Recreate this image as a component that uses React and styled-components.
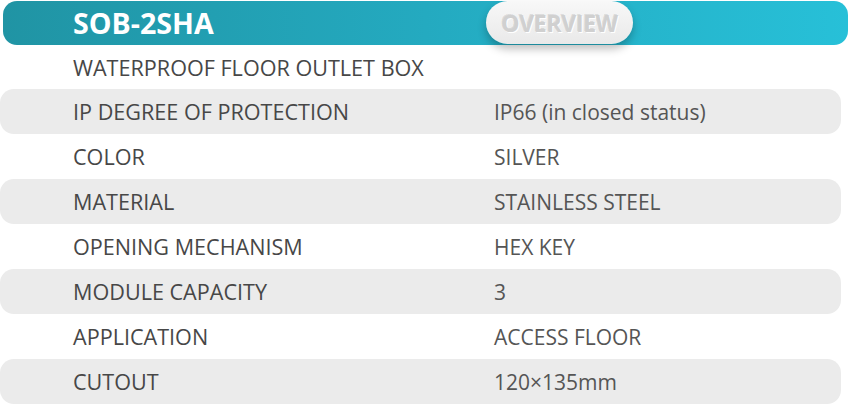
import styled, { createGlobalStyle } from "styled-components";

const Global = createGlobalStyle`
  html, body {
    margin: 0;
    padding: 0;
    background: #fff;
  }
  body {
    font-family: "Open Sans", "Noto Sans", sans-serif;
  }
`;

const Wrap = styled.div`
  width: 850px;
  height: 404px;
  overflow: hidden;
  padding-top: 1px;
  box-sizing: border-box;
`;

const Header = styled.header`
  margin: 0 2px 0 3px;
  height: 44px;
  border-radius: 14px;
  background: linear-gradient(90deg, #2094a4 0%, #24aac0 50%, #27c0d8 100%);
  display: flex;
  align-items: center;
  position: relative;
`;

const Title = styled.h1`
  margin: 0 0 0 70px;
  font-size: 28.6px;
  font-weight: 700;
  color: #fff;
  line-height: 1;
`;

const Pill = styled.div`
  position: absolute;
  left: 483px;
  top: 0;
  width: 147px;
  height: 43px;
  border-radius: 22px;
  background: linear-gradient(180deg, #f8f8f8 0%, #e9e9e9 100%);
  box-shadow: 0 5px 8px rgba(0, 0, 0, 0.25);
  display: flex;
  align-items: center;
  justify-content: center;
`;

const PillText = styled.span`
  font-size: 23px;
  font-weight: 700;
  color: #d0d0d0;
  letter-spacing: -0.3px;
  text-shadow: 1px 1px 0 #ffffff, -1px -1px 0 rgba(0, 0, 0, 0.1);
`;

const Subtitle = styled.div`
  height: 44px;
  display: flex;
  align-items: center;
  padding-left: 73px;
  font-size: 21.6px;
  font-weight: 500;
  color: #474747;
`;

const Row = styled.div`
  height: 45px;
  width: 841px;
  display: flex;
  align-items: center;
  border-radius: 14px;
  background: ${(p) => (p.$shade ? "#ebebeb" : "transparent")};
`;

const Label = styled.div`
  width: 494px;
  padding-left: 73px;
  box-sizing: border-box;
  font-size: 21.6px;
  font-weight: 500;
  color: #474747;
`;

const Value = styled.div`
  font-size: 21px;
  color: #555;
`;

const specs = [
  ["IP DEGREE OF PROTECTION", "IP66 (in closed status)"],
  ["COLOR", "SILVER"],
  ["MATERIAL", "STAINLESS STEEL"],
  ["OPENING MECHANISM", "HEX KEY"],
  ["MODULE CAPACITY", "3"],
  ["APPLICATION", "ACCESS FLOOR"],
  ["CUTOUT", "120×135mm"],
];

export default function App() {
  return (
    <Wrap>
      <Global />
      <Header>
        <Title>SOB-2SHA</Title>
        <Pill>
          <PillText>OVERVIEW</PillText>
        </Pill>
      </Header>
      <Subtitle>WATERPROOF FLOOR OUTLET BOX</Subtitle>
      {specs.map(([label, value], i) => (
        <Row key={label} $shade={i % 2 === 0}>
          <Label>{label}</Label>
          <Value>{value}</Value>
        </Row>
      ))}
    </Wrap>
  );
}
